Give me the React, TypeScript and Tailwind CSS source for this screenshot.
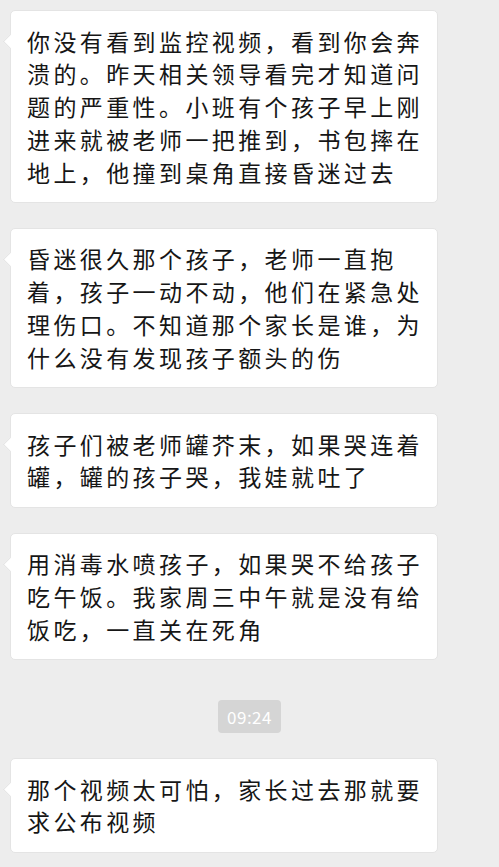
import React from "react";

type TMessage = {
  id: number;
  text: string;
};

const MESSAGES_BEFORE: TMessage[] = [
  {
    id: 1,
    text: "你没有看到监控视频，看到你会奔溃的。昨天相关领导看完才知道问题的严重性。小班有个孩子早上刚进来就被老师一把推到，书包摔在地上，他撞到桌角直接昏迷过去",
  },
  {
    id: 2,
    text: "昏迷很久那个孩子，老师一直抱着，孩子一动不动，他们在紧急处理伤口。不知道那个家长是谁，为什么没有发现孩子额头的伤",
  },
  {
    id: 3,
    text: "孩子们被老师罐芥末，如果哭连着罐，罐的孩子哭，我娃就吐了",
  },
  {
    id: 4,
    text: "用消毒水喷孩子，如果哭不给孩子吃午饭。我家周三中午就是没有给饭吃，一直关在死角",
  },
];

const MESSAGES_AFTER: TMessage[] = [
  {
    id: 5,
    text: "那个视频太可怕，家长过去那就要求公布视频",
  },
];

const Bubble = ({ text }: { text: string }) => {
  return (
    <div className="relative w-[428px] rounded-[5px] border border-[#e4e4e4] bg-white py-[13.5px] pl-[16px] pr-[10px]">
      {/* left tail */}
      <div className="absolute left-[-6px] top-[25px] h-[11px] w-[11px] rotate-45 border-b border-l border-[#e4e4e4] bg-white" />
      <p className="relative w-[400px] text-[23px] leading-[32.8px] tracking-[3.4px] text-[#161616]">
        {text}
      </p>
    </div>
  );
};

const App = () => {
  return (
    <div
      className="flex min-h-[867px] w-full flex-col gap-[25px] overflow-hidden bg-[#ededed] pl-[10px] pt-[10px]"
      style={{ fontFamily: '"Noto Sans CJK SC", "Noto Sans", sans-serif' }}
    >
      {MESSAGES_BEFORE.map((msg) => (
        <Bubble key={msg.id} text={msg.text} />
      ))}
      <div className="mt-[15px] flex w-[479px] justify-center">
        <span className="flex h-[33px] w-[63px] items-center justify-center rounded-[4px] bg-[#d5d5d5] text-[17px] tracking-[0.5px] text-white">
          09:24
        </span>
      </div>
      {MESSAGES_AFTER.map((msg) => (
        <Bubble key={msg.id} text={msg.text} />
      ))}
    </div>
  );
};

export default App;
